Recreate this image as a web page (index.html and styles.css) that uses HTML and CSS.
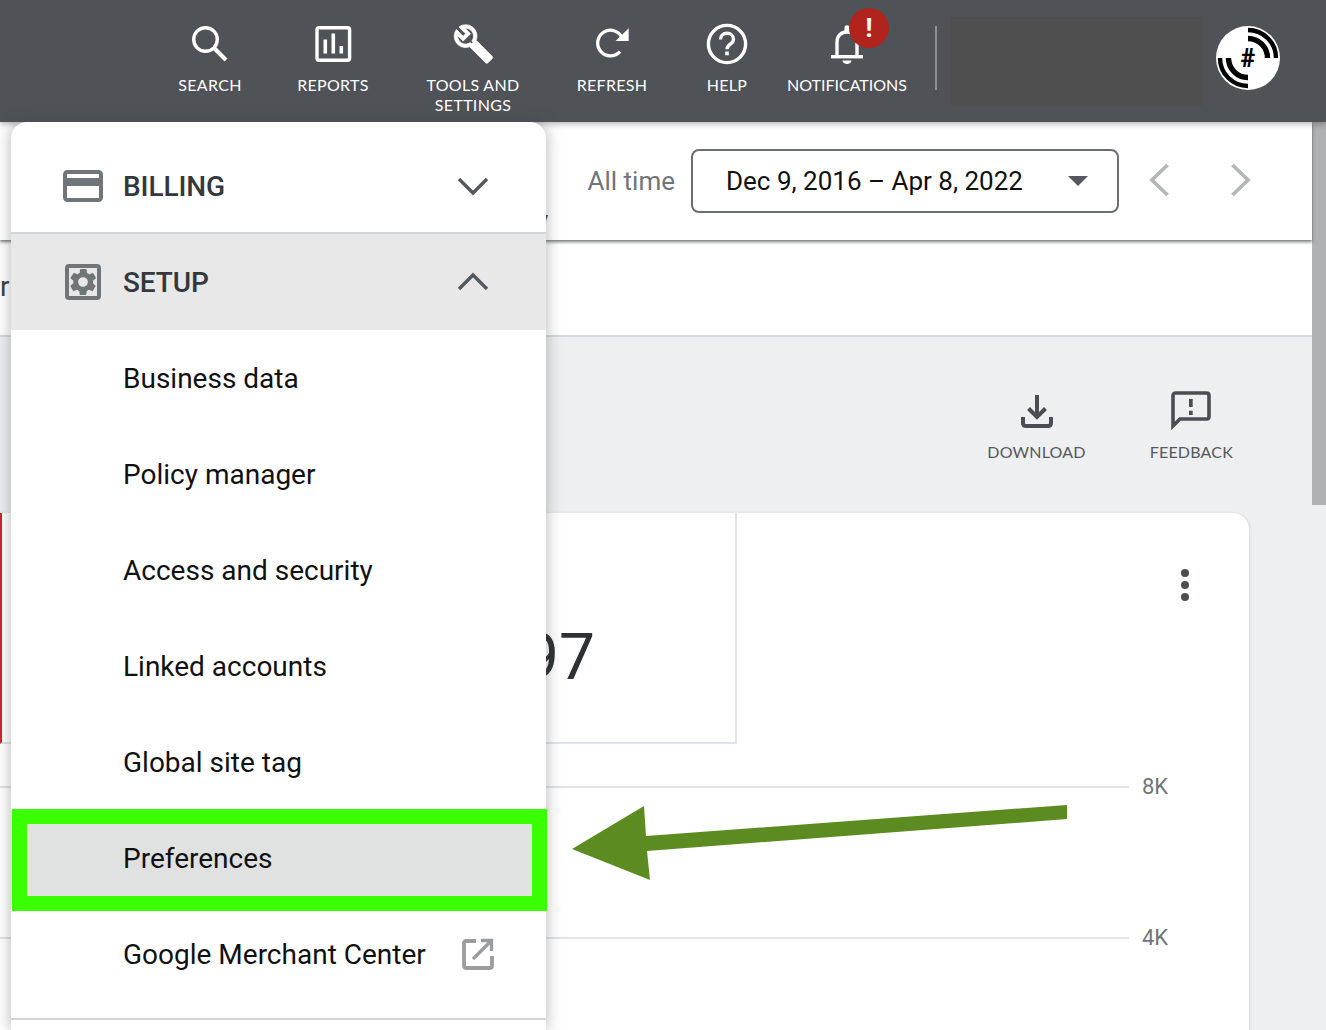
FILE: index.html
```html
<!DOCTYPE html>
<html lang="en">
<head>
    <meta charset="UTF-8">
    <meta name="viewport" content="width=device-width, initial-scale=1.0">
    <title>Preferences menu</title>
    <link rel="stylesheet" href="styles.css">
</head>
<body>
    <header class="topbar">
        <nav class="top-nav">
            <a class="nav-item">
                <svg class="nav-icon" viewBox="0 0 44 44"><circle cx="17.500" cy="17.500" r="11.800" fill="none" stroke="#fff" stroke-width="3.400"/><path d="M26 26l12 12" stroke="#fff" stroke-width="4" fill="none"/></svg>
                <span class="nav-label">SEARCH</span>
            </a>
            <a class="nav-item">
                <svg class="nav-icon" viewBox="0 0 44 44"><rect x="6" y="5.700" width="32.600" height="32.600" rx="2" fill="none" stroke="#fff" stroke-width="3.400"/><path d="M12.500 17.500h3.600v14h-3.600zM20.500 11.500h3.600v20h-3.600zM28.500 24h3.600v7.500h-3.600z" fill="#fff"/></svg>
                <span class="nav-label">REPORTS</span>
            </a>
            <a class="nav-item">
                <svg class="nav-icon" viewBox="0 0 44 44"><path transform="translate(1.500 1) scale(1.750)" fill="#fff" stroke="#fff" stroke-width=".4" d="M22.610 18.990l-9.080-9.080c.93-2.340.45-5.100-1.440-7C9.790.61 6.210.4 3.660 2.260L7.500 6.110 6.080 7.520 2.250 3.690C.39 6.230.6 9.820 2.900 12.110c1.860 1.860 4.570 2.350 6.890 1.480l9.110 9.110c.39.39 1.020.39 1.410 0l2.300-2.300c.4-.38.4-1.010 0-1.410zm-3 1.600l-9.460-9.460c-.61.45-1.290.72-2 .82-1.360.2-2.790-.21-3.830-1.250C3.370 9.760 2.930 8.500 3 7.260l3.090 3.090 4.240-4.240-3.090-3.090c1.240-.07 2.490.37 3.440 1.310 1.080 1.080 1.490 2.570 1.240 3.960-.12.71-.42 1.370-.88 1.960l9.450 9.450-.88.88z"/><path d="M21 21l15.500 15.500" stroke="#fff" stroke-width="5" fill="none"/></svg>
                <span class="nav-label">TOOLS AND<br>SETTINGS</span>
            </a>
            <a class="nav-item">
                <svg class="nav-icon" viewBox="0 0 44 44"><path d="M32 15.500A12.800 12.800 0 1 0 30 29.600" fill="none" stroke="#fff" stroke-width="3.300"/><path d="M38.700 6.300V19H25.500z" fill="#fff"/></svg>
                <span class="nav-label">REFRESH</span>
            </a>
            <a class="nav-item">
                <svg class="nav-icon" viewBox="0 0 44 44"><circle cx="22" cy="22" r="18.600" fill="none" stroke="#fff" stroke-width="3.400"/><path d="M15.500 17.500c0-3.800 2.900-6.300 6.500-6.300s6.500 2.500 6.500 6c0 4.800-6.500 5-6.500 10" fill="none" stroke="#fff" stroke-width="3.400"/><rect x="20.200" y="29.500" width="3.600" height="3.800" fill="#fff"/></svg>
                <span class="nav-label">HELP</span>
            </a>
            <a class="nav-item nav-item-bell">
                <svg class="nav-icon" viewBox="0 0 44 44"><path d="M12 34V20c0-6 4-10 10-10s10 4 10 10v14" fill="none" stroke="#fff" stroke-width="3.400"/><path d="M6 33h32v3.400H6z" fill="#fff"/><path d="M19.500 9V5.500c0-3 5-3 5 0V9zM17.500 38.500h9c0 4.500-9 4.500-9 0z" fill="#fff"/></svg>
                <span class="nav-label">NOTIFICATIONS</span>
                <span class="alert-badge">!</span>
            </a>
        </nav>
        <div class="top-divider"></div>
        <div class="account-box"></div>
        <svg class="avatar" viewBox="0 0 64 64">
            <circle cx="32" cy="32" r="32" fill="#fff"/>
            <g fill="none" stroke="#000">
                <path stroke-width="4.400" d="M32 4a28 28 0 0 1 28 28"/>
                <path stroke-width="5.400" d="M32 12.500A19.500 19.500 0 0 1 51.500 32"/>
                <path stroke-width="4.400" d="M32 60A28 28 0 0 1 4 32"/>
                <path stroke-width="5.400" d="M32 51.500A19.500 19.500 0 0 1 12.500 32"/>
            </g>
            <text x="32" y="41" class="avatar-hash">#</text>
        </svg>
    </header>

    <div class="workspace">
        <main class="main-area">
            <div class="date-bar">
                <span class="cut-title">y</span>
                <span class="range-name">All time</span>
                <div class="date-select">
                    <span>Dec 9, 2016 – Apr 8, 2022</span>
                    <span class="caret"></span>
                </div>
                <svg class="pager" viewBox="0 0 24 36"><path d="M20.500 3L5 18l15.500 15" fill="none" stroke="#b4b6b8" stroke-width="3.800"/></svg>
                <svg class="pager pager-next" viewBox="0 0 24 36"><path d="M3.500 3L19 18 3.500 33" fill="none" stroke="#b4b6b8" stroke-width="3.800"/></svg>
            </div>
            <div class="tab-strip"><span class="cut-tab">r</span></div>
            <div class="content">
                <div class="actions">
                    <a class="action">
                        <svg class="action-icon" viewBox="0 0 40 40"><path d="M20 4v22M11.500 17.500l8.500 8.500 8.500-8.500" fill="none" stroke="#4a4d52" stroke-width="4"/><path d="M6 26v6c0 2 1 3 3 3h22c2 0 3-1 3-3v-6" fill="none" stroke="#4a4d52" stroke-width="4"/></svg>
                        <span>DOWNLOAD</span>
                    </a>
                    <a class="action">
                        <svg class="action-icon" viewBox="0 0 40 40"><path d="M2 35V4.500C2 3 3 2 4.500 2h31C37 2 38 3 38 4.500v21c0 1.500-1 2.500-2.500 2.500H9z" fill="none" stroke="#4a4d52" stroke-width="3.600"/><path d="M18 8h3.700v8H18zM18 19.700h3.700V24H18z" fill="#4a4d52"/></svg>
                        <span>FEEDBACK</span>
                    </a>
                </div>
                <section class="card">
                    <div class="card-top">
                        <div class="metric"><span class="metric-value">97</span></div>
                        <div class="more-dots"><i></i><i></i><i></i></div>
                    </div>
                    <div class="chart">
                        <div class="grid-row"><div class="grid-line"></div><span class="grid-label">8K</span></div>
                        <div class="grid-row"><div class="grid-line"></div><span class="grid-label">4K</span></div>
                    </div>
                </section>
            </div>
        </main>
        <div class="scroll-track"><div class="scroll-thumb"></div></div>
    </div>

    <aside class="side-menu">
        <div class="menu-head menu-head-first">
            <svg class="menu-icon" viewBox="0 0 40 36"><rect x="2" y="4" width="36" height="28" rx="2.500" fill="none" stroke="#70757a" stroke-width="4"/><rect x="2" y="10" width="36" height="8" fill="#70757a"/></svg>
            <span class="menu-title">BILLING</span>
            <svg class="chevron" viewBox="0 0 32 20"><path d="M2 3l14 14L30 3" fill="none" stroke="#55585d" stroke-width="3.400"/></svg>
        </div>
        <div class="menu-head menu-head-open">
            <svg class="menu-icon" viewBox="0 0 40 36"><rect x="4" y="2" width="32" height="32" rx="2" fill="none" stroke="#70757a" stroke-width="4"/><path transform="translate(3.800 1.800) scale(1.350)" fill="#70757a" d="M19.400 13c.04-.3.06-.64.06-1s-.02-.7-.07-1l2.030-1.580a.5.5 0 0 0 .12-.61l-1.920-3.320a.5.5 0 0 0-.59-.22l-2.390.96c-.5-.38-1.030-.7-1.620-.94l-.36-2.540a.48.48 0 0 0-.48-.41h-3.840a.48.48 0 0 0-.47.41l-.36 2.540c-.59.24-1.130.57-1.620.94l-2.390-.96a.49.49 0 0 0-.59.22L2.750 8.800a.49.49 0 0 0 .12.61L4.900 11c-.05.3-.09.64-.09 1s.02.7.07 1l-2.030 1.580a.5.5 0 0 0-.12.61l1.920 3.320c.12.22.37.29.59.22l2.390-.96c.5.38 1.030.7 1.620.94l.36 2.540c.05.24.24.41.48.41h3.840c.24 0 .44-.17.47-.41l.36-2.540c.59-.24 1.130-.56 1.620-.94l2.390.96c.22.08.47 0 .59-.22l1.920-3.320a.5.5 0 0 0-.12-.61zM12 15.600a3.600 3.600 0 1 1 0-7.200 3.600 3.600 0 0 1 0 7.200z"/></svg>
            <span class="menu-title">SETUP</span>
            <svg class="chevron" viewBox="0 0 32 20"><path d="M2 17L16 3l14 14" fill="none" stroke="#55585d" stroke-width="3.400"/></svg>
        </div>
        <a class="menu-link">Business data</a>
        <a class="menu-link">Policy manager</a>
        <a class="menu-link">Access and security</a>
        <a class="menu-link">Linked accounts</a>
        <a class="menu-link">Global site tag</a>
        <a class="menu-link menu-link-current">Preferences</a>
        <a class="menu-link">Google Merchant Center
            <svg class="external" viewBox="0 0 32 32"><path d="M14 3H4c-1 0-2 1-2 2v23c0 1 1 2 2 2h24c1 0 2-1 2-2V18" fill="none" stroke="#9a9c9e" stroke-width="3.800"/><path d="M19 2.500h10.500V13M28.500 3.500L11 21" fill="none" stroke="#9a9c9e" stroke-width="3.400"/></svg>
        </a>
        <div class="menu-end"></div>
    </aside>

    <div class="callout-box"></div>
    <svg class="callout-arrow" viewBox="0 0 1326 1030"><polygon points="572,849 644,806 646,836 1067,805 1067,819 647,851 650,880" fill="#5c8c21"/></svg>
</body>
</html>
```

FILE: styles.css
```css
html, body {
    margin: 0;
    height: 1030px;
    overflow: hidden;
    background: #fff;
    font-family: Roboto, "Liberation Sans", sans-serif;
}
a { color: inherit; text-decoration: none; }

/* top bar */
.topbar {
    display: flex;
    align-items: flex-start;
    height: 122px;
    padding-left: 150px;
    box-sizing: border-box;
    background: #4f5257;
    box-shadow: 0 2px 6px rgba(0, 0, 0, .3);
    position: relative;
    z-index: 2;
}
.top-nav {
    display: grid;
    grid-template-columns: 120px 126px 154px 124px 106px 134px;
}
.nav-item {
    display: flex;
    flex-direction: column;
    align-items: center;
    padding-top: 22px;
    position: relative;
}
.nav-icon { width: 44px; height: 44px; }
.nav-label {
    margin-top: 9px;
    color: #fff;
    font: 16px/20px Lato, sans-serif;
    letter-spacing: .3px;
    text-align: center;
}
.nav-item-bell .nav-label { letter-spacing: 0; }
.alert-badge {
    position: absolute;
    left: 69px;
    top: 8px;
    width: 40px;
    height: 40px;
    border-radius: 50%;
    background: #b0241d;
    color: #fff;
    font: bold 26px/40px Roboto, sans-serif;
    text-align: center;
}
.top-divider {
    width: 2px;
    height: 64px;
    margin: 26px 14px 0 21px;
    background: #8b8e92;
}
.account-box {
    width: 251px;
    height: 89px;
    margin-top: 17px;
    background: #4f4f4f;
}
.avatar {
    width: 64px;
    height: 64px;
    margin: 26px 0 0 14px;
}
.avatar-hash {
    font: 900 25px Roboto, sans-serif;
    text-anchor: middle;
}

/* page under the bar */
.workspace { display: flex; height: 908px; }
.main-area { width: 1312px; display: flex; flex-direction: column; }
.scroll-track { width: 14px; background: #eeeff1; }
.scroll-thumb { height: 383px; background: #b0b1b2; }

.date-bar {
    display: flex;
    align-items: center;
    height: 118px;
    flex-shrink: 0;
    padding-right: 59px;
    box-sizing: border-box;
    background: #fff;
    box-shadow: 0 2px 3px rgba(60, 64, 67, .7);
    position: relative;
    z-index: 1;
}
.cut-title {
    margin-left: 535px;
    margin-right: auto;
    margin-top: 78px;
    font-size: 28px;
    color: #3c4043;
}
.range-name {
    margin-right: 16px;
    font-size: 26px;
    color: #70757a;
}
.date-select {
    display: flex;
    align-items: center;
    justify-content: space-between;
    width: 428px;
    height: 64px;
    padding: 0 29px 0 33px;
    box-sizing: border-box;
    border: 2px solid #6b6e73;
    border-radius: 8px;
    font-size: 26px;
    color: #111;
}
.caret {
    width: 0;
    height: 0;
    border-left: 10px solid transparent;
    border-right: 10px solid transparent;
    border-top: 10px solid #55585d;
}
.pager { width: 24px; height: 36px; margin: 0 0 2px 28px; }
.pager-next { margin-left: 58px; }

.tab-strip {
    height: 97px;
    flex-shrink: 0;
    box-sizing: border-box;
    border-bottom: 2px solid #d5d8dc;
    padding-top: 28px;
}
.cut-tab { font-size: 28px; color: #3c4043; line-height: 38px; display: block; }

.content { flex: 1; background: #eeeff1; min-height: 0; overflow: hidden; }
.actions {
    display: flex;
    justify-content: flex-end;
    gap: 64px;
    height: 176px;
    padding: 54px 79px 0 0;
    box-sizing: border-box;
}
.action {
    display: flex;
    flex-direction: column;
    align-items: center;
    color: #55585d;
    font: 16px/20px Lato, sans-serif;
    letter-spacing: .2px;
}
.action-icon { width: 40px; height: 40px; margin-bottom: 11px; }

/* card behind the menu */
.card {
    width: 1249px;
    height: 520px;
    background: #fff;
    border-radius: 0 16px 0 0;
    box-shadow: 0 1px 3px rgba(60, 64, 67, .3);
}
.card-top { display: flex; height: 231px; }
.metric {
    width: 737px;
    box-sizing: border-box;
    border-left: 2px solid #d3202e;
    border-right: 2px solid #e1e4e8;
    border-bottom: 2px solid #e1e4e8;
    padding: 107px 0 0 521px;
}
.metric-value { font: 64px/76px Roboto, sans-serif; color: #2e3134; }
.more-dots {
    display: flex;
    flex-direction: column;
    gap: 4px;
    margin: 56px 0 0 444px;
}
.more-dots i {
    width: 8px;
    height: 8px;
    border-radius: 50%;
    background: #4a4d52;
}
.chart { padding-top: 42px; }
.grid-row {
    display: flex;
    align-items: flex-start;
    height: 151px;
    color: #70757a;
    font-size: 22px;
}
.grid-line { width: 1129px; height: 2px; margin-right: 13px; background: #e1e3e6; }
.grid-label { margin-top: -12px; line-height: 26px; }

/* overlay menu */
.side-menu {
    position: absolute;
    left: 11px;
    top: 122px;
    bottom: 0;
    width: 535px;
    background: #fff;
    border-radius: 16px 16px 0 0;
    box-shadow: 0 0 16px rgba(60, 64, 67, .4);
    z-index: 3;
    overflow: hidden;
}
.menu-head {
    display: flex;
    align-items: center;
    height: 96px;
    padding: 0 57px 0 52px;
    color: #34373b;
}
.menu-head-first {
    height: 112px;
    padding-top: 18px;
    box-sizing: border-box;
    border-bottom: 2px solid #d2d5da;
}
.menu-head-open { background: #e8e8e8; }
.menu-icon { width: 40px; height: 36px; margin-right: 20px; flex-shrink: 0; }
.menu-title { flex: 1; font-size: 28px; font-weight: 500; letter-spacing: -.1px; }
.chevron { width: 32px; height: 20px; }
.menu-link {
    display: flex;
    align-items: center;
    justify-content: space-between;
    height: 96px;
    padding: 0 52px 0 112px;
    font-size: 28px;
    color: #111;
}
.menu-link-current { background: #e0e2e1; }
.external { width: 32px; height: 32px; }
.menu-end { margin-top: 16px; border-top: 2px solid #d2d4d6; }

/* screenshot annotation */
.callout-box {
    position: absolute;
    left: 12px;
    top: 809px;
    width: 535px;
    height: 102px;
    box-sizing: border-box;
    border: 15px solid #3aff00;
    z-index: 4;
}
.callout-arrow {
    position: absolute;
    left: 0;
    top: 0;
    width: 1326px;
    height: 1030px;
    z-index: 4;
}
```
